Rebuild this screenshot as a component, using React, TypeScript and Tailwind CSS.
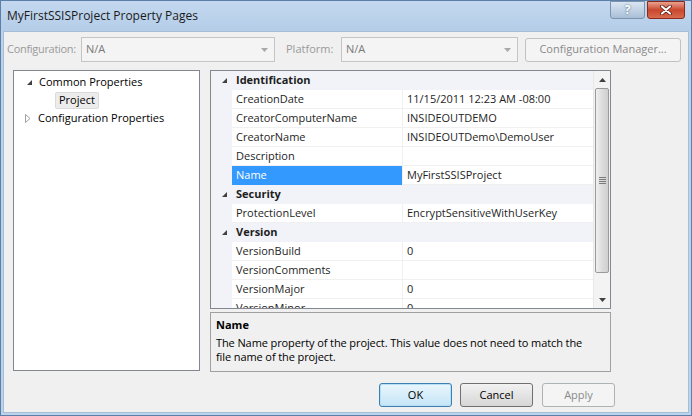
import React from 'react';

const font = { fontFamily: '"Open Sans", "Noto Sans", sans-serif' };

type Row =
    | { kind: 'cat'; label: string }
    | { kind: 'prop'; label: string; value?: string; selected?: boolean };

const rows: Row[] = [
    { kind: 'cat', label: 'Identification' },
    { kind: 'prop', label: 'CreationDate', value: '11/15/2011 12:23 AM -08:00' },
    { kind: 'prop', label: 'CreatorComputerName', value: 'INSIDEOUTDEMO' },
    { kind: 'prop', label: 'CreatorName', value: 'INSIDEOUTDemo\\DemoUser' },
    { kind: 'prop', label: 'Description' },
    { kind: 'prop', label: 'Name', value: 'MyFirstSSISProject', selected: true },
    { kind: 'cat', label: 'Security' },
    { kind: 'prop', label: 'ProtectionLevel', value: 'EncryptSensitiveWithUserKey' },
    { kind: 'cat', label: 'Version' },
    { kind: 'prop', label: 'VersionBuild', value: '0' },
    { kind: 'prop', label: 'VersionComments' },
    { kind: 'prop', label: 'VersionMajor', value: '0' },
    { kind: 'prop', label: 'VersionMinor', value: '0' },
];

function Expanded({ className = '' }: { className?: string }) {
    // small filled corner triangle, win7 "expanded" glyph
    return (
        <svg width="7" height="7" viewBox="0 0 7 7" className={className}>
            <path d="M6 1 L6 6 L1 6 Z" fill="#404040" />
        </svg>
    );
}

function Collapsed({ className = '' }: { className?: string }) {
    return (
        <svg width="6" height="9" viewBox="0 0 6 9" className={className}>
            <path d="M0.5 0.5 L5 4.5 L0.5 8.5 Z" fill="white" stroke="#a0a0a0" />
        </svg>
    );
}

function Combo({ width }: { width: string }) {
    return (
        <div className={`${width} h-[25px] border border-[#c5c5c5] bg-[#f4f4f4] flex items-center justify-between pl-[4px] pr-[6px]`}>
            <span className="text-[#7a7a7a]">N/A</span>
            <svg width="7" height="4" viewBox="0 0 7 4">
                <path d="M0 0 L7 0 L3.5 4 Z" fill="#a8a8a8" />
            </svg>
        </div>
    );
}

function PropGrid() {
    return (
        <div className="h-[239px] border border-[#828790] bg-white flex overflow-hidden">
            <div className="w-[382px] flex flex-col">
                {rows.map((r, i) =>
                    r.kind === 'cat' ? (
                        <div key={i} className="h-[19px] shrink-0 flex items-center bg-[#f1f3f8]">
                            <div className="w-[21px] flex justify-end pr-[4px]">
                                <Expanded />
                            </div>
                            <span className="pl-[4px] font-bold text-[#1e1e1e]">{r.label}</span>
                        </div>
                    ) : (
                        <div key={i} className="h-[19px] shrink-0 flex">
                            <div className="w-[21px] bg-[#f1f3f8]" />
                            <div className={`w-[170px] flex items-center pl-[4px] border-b ${r.selected ? 'bg-[#3399ff] text-white border-[#3399ff]' : 'border-[#f0f0f0] text-[#1e1e1e]'}`}>
                                {r.label}
                            </div>
                            <div className="w-[1px] bg-[#f0f0f0]" />
                            <div className="flex-1 flex items-center pl-[4px] border-b border-[#f0f0f0] text-[#1e1e1e]">
                                {r.value ?? ''}
                            </div>
                        </div>
                    )
                )}
            </div>
            {/* scrollbar */}
            <div className="w-[17px] flex flex-col bg-[#f3f3f3] border-l border-[#e8e8e8]">
                <div className="h-[17px] flex items-center justify-center">
                    <svg width="7" height="4" viewBox="0 0 7 4">
                        <path d="M0 4 L7 4 L3.5 0 Z" fill="#404040" />
                    </svg>
                </div>
                <div className="mx-[1px] h-[185px] rounded-[2px] border border-[#9a9a9a] bg-gradient-to-r from-[#f0f0f0] via-[#dcdcdc] to-[#cfcfcf] flex items-center justify-center">
                    <div className="flex flex-col gap-[1px]">
                        <div className="w-[7px] h-[1px] bg-[#7a7a7a]" />
                        <div className="w-[7px] h-[1px] bg-[#7a7a7a]" />
                        <div className="w-[7px] h-[1px] bg-[#7a7a7a]" />
                        <div className="w-[7px] h-[1px] bg-[#7a7a7a]" />
                    </div>
                </div>
                <div className="flex-1" />
                <div className="h-[17px] flex items-center justify-center">
                    <svg width="7" height="4" viewBox="0 0 7 4">
                        <path d="M0 0 L7 0 L3.5 4 Z" fill="#404040" />
                    </svg>
                </div>
            </div>
        </div>
    );
}

export default function App() {
    return (
        <div style={font} className="w-[692px] h-[416px] flex flex-col text-[11px] bg-[#bcd3ec] border border-[#5b7fa8] text-black">
            {/* Title bar */}
            <div className="h-[30px] shrink-0 flex items-center justify-between pl-[6px] pr-[6px] bg-gradient-to-b from-[#c3d8ef] to-[#b5cde8]">
                <span className="text-[12px] text-[#1a1a1a]">MyFirstSSISProject Property Pages</span>
                <div className="flex gap-[2px] self-start">
                    <div className="w-[35px] h-[18px] rounded-b-[3px] border border-[#7b93ad] bg-gradient-to-b from-[#dbe6f2] to-[#a9bfd7] flex items-center justify-center text-white font-bold text-[12px] leading-none [text-shadow:0_0_2px_#3d5670]">
                        ?
                    </div>
                    <div className="w-[38px] h-[18px] rounded-b-[3px] border border-[#8a2a1c] bg-gradient-to-b from-[#e8a08f] via-[#c9462c] to-[#d86b4e] flex items-center justify-center">
                        <svg width="12" height="10" viewBox="0 0 12 10">
                            <path d="M2 1.5 L10 8.5 M10 1.5 L2 8.5" stroke="#4b1208" strokeWidth="3.6" strokeLinecap="round" />
                            <path d="M2 1.5 L10 8.5 M10 1.5 L2 8.5" stroke="white" strokeWidth="2.2" strokeLinecap="round" />
                        </svg>
                    </div>
                </div>
            </div>

            {/* Client area */}
            <div className="flex-1 mx-[2px] mb-[2px] bg-[#f0f0f0] border border-[#a6bdd6] flex flex-col">
                {/* Configuration row */}
                <div className="mt-[5px] h-[25px] flex items-center pl-[3px]">
                    <span className="w-[74px] text-[#9a9a9a] whitespace-nowrap tracking-[-0.3px]">Configuration:</span>
                    <Combo width="w-[194px]" />
                    <span className="ml-[11px] w-[55px] text-[#9a9a9a]">Platform:</span>
                    <Combo width="w-[177px]" />
                    <div className="ml-[7px] w-[156px] h-[24px] rounded-[3px] border border-[#c2c2c2] bg-[#f4f4f4] flex items-center justify-center text-[#8a8a8a]">
                        Configuration Manager...
                    </div>
                </div>

                {/* Main panels */}
                <div className="mt-[8px] flex pl-[9px]">
                    <div className="w-[187px] h-[301px] border border-[#828790] bg-white pt-[2px]">
                        <div className="h-[18px] flex items-center pl-[12px] gap-[6px]">
                            <Expanded />
                            <span>Common Properties</span>
                        </div>
                        <div className="h-[18px] flex items-center pl-[41px]">
                            <span className="px-[3px] h-[17px] flex items-center bg-[#ececec] border border-[#dadada] rounded-[2px]">Project</span>
                        </div>
                        <div className="h-[18px] flex items-center pl-[11px] gap-[7px]">
                            <Collapsed />
                            <span>Configuration Properties</span>
                        </div>
                    </div>

                    <div className="ml-[10px] w-[401px] flex flex-col">
                        <PropGrid />
                        <div className="mt-[3px] h-[60px] border border-[#a0a0a0] bg-[#f0f0f0] pl-[5px] pr-[2px] pt-[3px] leading-[14px]">
                            <div className="font-bold h-[17px] flex items-center">Name</div>
                            <div className="pt-[3px] tracking-[-0.1px]">
                                The Name property of the project. This value does not need to match the
                                <br />
                                file name of the project.
                            </div>
                        </div>
                    </div>
                </div>

                {/* Buttons */}
                <div className="mt-[11px] flex pl-[375px] gap-[8px]">
                    <div className="w-[73px] h-[24px] rounded-[3px] border border-[#3c7fb1] bg-gradient-to-b from-[#eaf6fd] to-[#c4e5f6] flex items-center justify-center shadow-[inset_0_0_0_1px_#b6e0f7]">
                        OK
                    </div>
                    <div className="w-[73px] h-[24px] rounded-[3px] border border-[#707070] bg-gradient-to-b from-[#f2f2f2] to-[#d6d6d6] flex items-center justify-center">
                        Cancel
                    </div>
                    <div className="ml-[1px] w-[73px] h-[24px] rounded-[3px] border border-[#adb2b5] bg-[#f4f4f4] flex items-center justify-center text-[#8a8a8a]">
                        Apply
                    </div>
                </div>
            </div>
        </div>
    );
}
